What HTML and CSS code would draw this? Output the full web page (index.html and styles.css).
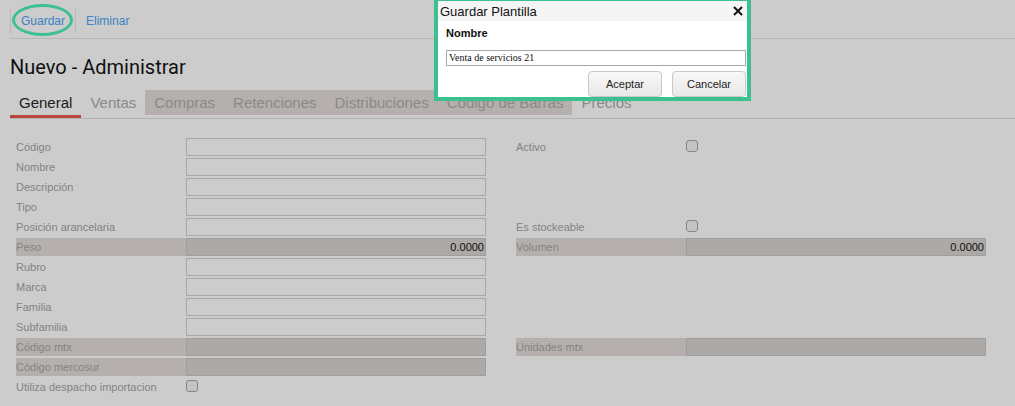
FILE: index.html
```html
<!DOCTYPE html>
<html lang="es">
<head>
    <title>Nuevo - Administrar</title>
    <link rel="stylesheet" href="styles.css">
</head>
<body>
<div class="page">
    <div class="toolbar">
        <a class="tool_btn">Guardar</a>
        <a class="tool_btn">Eliminar</a>
    </div>

    <h1 class="title">Nuevo - Administrar</h1>

    <ul class="tabs">
        <li class="tab active">General</li>
        <li class="tab">Ventas</li>
        <li class="tab locked">Compras</li>
        <li class="tab locked">Retenciones</li>
        <li class="tab locked">Distribuciones</li>
        <li class="tab locked">Código de Barras</li>
        <li class="tab">Precios</li>
    </ul>

    <div class="form">
        <!-- columna izquierda -->
        <div class="form_col">
            <div class="row"><label>Código</label><span class="field"></span></div>
            <div class="row"><label>Nombre</label><span class="field"></span></div>
            <div class="row"><label>Descripción</label><span class="field"></span></div>
            <div class="row"><label>Tipo</label><span class="field"></span></div>
            <div class="row"><label>Posición arancelaria</label><span class="field"></span></div>
            <div class="row readonly"><label>Peso</label><span class="field num">0.0000</span></div>
            <div class="row"><label>Rubro</label><span class="field"></span></div>
            <div class="row"><label>Marca</label><span class="field"></span></div>
            <div class="row"><label>Familia</label><span class="field"></span></div>
            <div class="row"><label>Subfamilia</label><span class="field"></span></div>
            <div class="row readonly"><label>Código mtx</label><span class="field"></span></div>
            <div class="row readonly"><label>Código mercosur</label><span class="field"></span></div>
            <div class="row"><label>Utiliza despacho importacion</label><span class="check"></span></div>
        </div>
        <!-- columna derecha -->
        <div class="form_col">
            <div class="row"><label>Activo</label><span class="check"></span></div>
            <div class="row"></div>
            <div class="row"></div>
            <div class="row"></div>
            <div class="row"><label>Es stockeable</label><span class="check"></span></div>
            <div class="row readonly"><label>Volumen</label><span class="field num">0.0000</span></div>
            <div class="row"></div>
            <div class="row"></div>
            <div class="row"></div>
            <div class="row"></div>
            <div class="row readonly"><label>Unidades mtx</label><span class="field"></span></div>
        </div>
    </div>
</div>

<div class="backdrop"></div>
<div class="mark"></div>

<div class="dialog">
    <div class="dialog_head">
        <span>Guardar Plantilla</span>
        <svg class="close" width="10" height="10" viewBox="0 0 10 10">
            <path d="M1 1 L9 9 M9 1 L1 9" stroke="#111" stroke-width="2"/>
        </svg>
    </div>
    <div class="dialog_body">
        <div class="dialog_label">Nombre</div>
        <div class="dialog_input">Venta de servicios 21</div>
        <div class="dialog_buttons">
            <button type="button" class="dlg_btn">Aceptar</button>
            <button type="button" class="dlg_btn">Cancelar</button>
        </div>
    </div>
</div>
</body>
</html>
```

FILE: styles.css
```css
* {
    box-sizing: border-box;
}

body {
    margin: 0;
    background-color: #fff;
    font-family: "Liberation Sans", Arial, sans-serif;
    overflow: hidden;
}

.page {
    padding-left: 10px;
}

.toolbar {
    display: flex;
    align-items: center;
    padding: 9px 0 5px 0;
    border-bottom: 1px solid #e4e4e4;
}

.tool_btn {
    height: 24px;
    line-height: 24px;
    padding: 0 10px;
    border-left: 1px solid #e6e6e6;
    color: #4ba3f5;
    font-size: 12px;
    cursor: pointer;
}

.title {
    margin: 14px 0 9px 0;
    font-family: Roboto, sans-serif;
    font-weight: normal;
    font-size: 20px;
    line-height: 28px;
    color: #151515;
}

.tabs {
    display: flex;
    list-style-type: none;
    margin: 0;
    padding: 0;
    border-bottom: 1px solid #dedede;
}

.tab {
    height: 28px;
    line-height: 25px;
    padding: 0 9px;
    font-size: 15px;
    color: #acacac;
    border-bottom: 3px solid transparent;
    background-clip: padding-box;
}

.tab.active {
    color: #262626;
    border-bottom-color: #e75849;
}

.tab.locked {
    background-color: #e3ddd9;
}

.form {
    display: flex;
    gap: 30px;
    margin-top: 19px;
    padding-left: 6px;
}

.form_col {
    width: 470px;
}

.row {
    display: flex;
    height: 18px;
    margin-bottom: 2px;
}

.row label {
    width: 170px;
    line-height: 18px;
    font-size: 11px;
    color: #a5a5a5;
}

.field {
    width: 300px;
    height: 18px;
    border: 1px solid #d2d2d2;
    font-size: 11px;
    line-height: 16px;
    color: #151515;
}

.field.num {
    text-align: right;
    padding-right: 1px;
}

.row.readonly label {
    background-color: #e3ddd9;
}

.row.readonly .field {
    background-color: #d9d4d0;
    border-color: #c9c6c3;
}

.check {
    width: 12px;
    height: 12px;
    margin-top: 2px;
    border: 1px solid #a6a6a6;
    border-radius: 3px;
    background-color: #f6f6f6;
}

.backdrop {
    position: fixed;
    top: 0;
    left: 0;
    right: 0;
    bottom: 0;
    background-color: rgba(0, 0, 0, 0.2);
}

.mark {
    position: absolute;
    left: 12px;
    top: 4px;
    width: 61px;
    height: 32px;
    border: 3px solid #3cc08f;
    border-radius: 50%;
}

.dialog {
    position: absolute;
    left: 434px;
    top: -3px;
    width: 317px;
    border: 4px solid #3cc08f;
    background-color: #fff;
}

.dialog_head {
    display: flex;
    justify-content: space-between;
    align-items: center;
    height: 20px;
    padding: 0 4px 0 2px;
    background-color: #f5f5f5;
    font-size: 13px;
    color: #111;
}

.dialog_body {
    padding: 6px 1px 0 8px;
}

.dialog_label {
    font-size: 11px;
    font-weight: bold;
    line-height: 13px;
    color: #111;
}

.dialog_input {
    height: 16px;
    margin-top: 10px;
    padding-left: 2px;
    border: 1px solid #a8a8a8;
    font-family: "Liberation Serif", serif;
    font-size: 10px;
    line-height: 14px;
    color: #111;
}

.dialog_buttons {
    display: flex;
    justify-content: flex-end;
    gap: 10px;
    margin-top: 5px;
}

.dlg_btn {
    width: 74px;
    height: 26px;
    border: 1px solid #c8c8c8;
    border-radius: 4px;
    background: linear-gradient(#f8f8f8, #e8e8e8);
    font-family: "Liberation Sans", Arial, sans-serif;
    font-size: 11px;
    color: #222;
    padding: 0;
}
```
